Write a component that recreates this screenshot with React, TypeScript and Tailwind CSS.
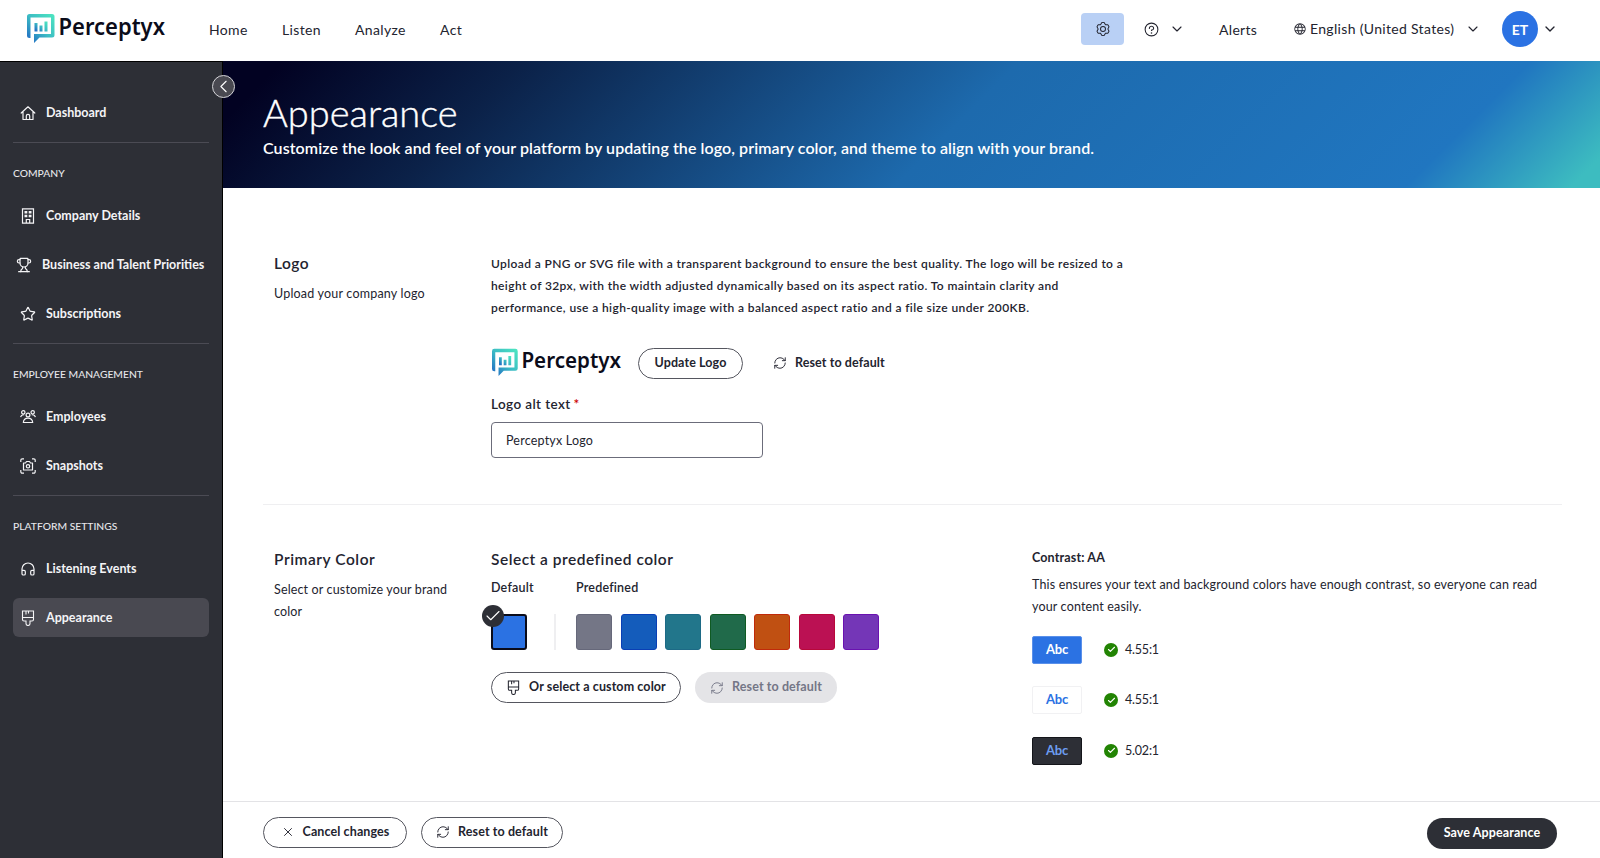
import type { ReactNode } from 'react';
import { ChevronDown, ChevronLeft, Check, Headphones, RefreshCw, Star, Trophy, X } from 'lucide-react';
import { PiGearSix, PiGlobe, PiQuestion } from 'react-icons/pi';

const swatches = [
  'bg-[#747686] border-[#66687a]',
  'bg-[#145cbb] border-[#0a3fb5]',
  'bg-[#22768b] border-[#1d6a86]',
  'bg-[#206a4a] border-[#0f5a22]',
  'bg-[#c05012] border-[#c02a0a]',
  'bg-[#bb1153] border-[#b8083a]',
  'bg-[#7436b7] border-[#6a12b0]',
];

const contrasts = [
  { box: 'bg-[#2b72e3] border-[#5a90ea] text-white', ratio: '4.55:1' },
  { box: 'bg-white border-[#f1f1f3] text-[#2b72e3]', ratio: '4.55:1' },
  { box: 'bg-[#2d2f36] border-[#14151a] text-[#6c9cf0]', ratio: '5.02:1' },
];

function Logo({ className, id }: { className: string; id: string }) {
  return (
    <svg viewBox="0 -3 139 33" className={className} role="img" aria-label="Perceptyx Logo">
      <defs>
        <linearGradient id={id} x1="0" y1="1" x2="1" y2="0">
          <stop offset="0.1" stopColor="#2372c4" />
          <stop offset="0.5" stopColor="#3cbcc4" />
          <stop offset="1" stopColor="#4ee8c0" />
        </linearGradient>
      </defs>
      <path
        d="M2.500 0H25a2.500 2.500 0 0 1 2.500 2.500V21a2.500 2.500 0 0 1-2.500 2.500H12.500L7 29V20H24V3.500H3.500V24H2.500a2.500 2.500 0 0 1-2.500-2.500V2.500a2.500 2.500 0 0 1 2.500-2.500Z"
        fill={`url(#${id})`}
      />
      <path d="M7.500 9h3v8.500h-3zM12.500 11.500h3v6h-3zM17.500 7.500h3v10h-3z" fill={`url(#${id})`} />
      <text
        x="31.500"
        y="20.500"
        textLength="106.500"
        lengthAdjust="spacingAndGlyphs"
        className="font-['Noto_Sans'] text-[22.500px] font-semibold"
        fill="#0b0c1a"
      >
        Perceptyx
      </text>
    </svg>
  );
}

function BrushIcon({ className }: { className?: string }) {
  return (
    <svg viewBox="0 0 16 16" className={className} fill="none" stroke="currentColor" strokeWidth="1.100">
      <path d="M2.500 1h11v8.500a1.500 1.500 0 0 1-1.500 1.500h-2v2.500a2 2 0 0 1-4 0V11H4a1.500 1.500 0 0 1-1.500-1.500ZM2.500 7.500h11M6 1v3.500M8.500 1v2.500" />
    </svg>
  );
}

function HomeIcon() {
  return (
    <svg viewBox="0 0 16 16" className="size-4" fill="none" stroke="currentColor" strokeWidth="1.200" strokeLinejoin="round" strokeLinecap="round">
      <path d="M1.200 8L8 1.800 14.800 8M3 6.800v7.700h10V6.800M6.300 14.300v-3.300a1.700 1.700 0 0 1 3.400 0v3.300" />
    </svg>
  );
}

function BuildingIcon() {
  return (
    <svg viewBox="0 0 16 16" className="size-4" fill="none" stroke="currentColor" strokeWidth="1.200">
      <path d="M2.500.8h11v14.400h-11zM6.300 15v-3.500h3.400V15" />
      <path d="M4.500 3h2.800v2.500H4.500zM8.700 3h2.800v2.500H8.700zM4.500 6.800h2.800v2.500H4.500zM8.700 6.800h2.800v2.500H8.700z" fill="currentColor" stroke="none" />
    </svg>
  );
}

function PeopleIcon() {
  return (
    <svg viewBox="0 0 16 16" className="size-4" fill="none" stroke="currentColor" strokeWidth="1.200" strokeLinejoin="round">
      <circle cx="3.300" cy="3.300" r="1.700" />
      <circle cx="12.700" cy="3.300" r="1.700" />
      <circle cx="8" cy="6" r="1.900" />
      <path d="M3.300 13.500c.3-2.700 2-4.300 4.700-4.300s4.400 1.600 4.700 4.300zM.6 8.200C1 6.500 2.200 5.600 4.200 5.800M15.400 8.200c-.4-1.700-1.600-2.600-3.600-2.400" />
    </svg>
  );
}

function SnapshotIcon() {
  return (
    <svg viewBox="0 0 16 16" className="size-4" fill="none" stroke="currentColor" strokeWidth="1.200" strokeLinejoin="round">
      <path d="M.8 4V2.200A1.400 1.400 0 0 1 2.200.8H4M12 .8h1.800a1.400 1.400 0 0 1 1.400 1.400V4M15.200 12v1.800a1.400 1.400 0 0 1-1.400 1.400H12M4 15.200H2.200a1.400 1.400 0 0 1-1.400-1.400V12" />
      <path d="M3.500 5h2l1-1.500h3l1 1.500h2v7h-9z" />
      <circle cx="8" cy="8.300" r="1.700" />
    </svg>
  );
}

function NavItem({ icon, label, className = 'pl-[7px] gap-2.5', active = false }: { icon: ReactNode; label: string; className?: string; active?: boolean }) {
  return (
    <a
      href="#"
      className={`flex h-[39px] items-center rounded-md whitespace-nowrap text-[12.500px] font-bold text-[#f4f4f6] ${className} ${active ? 'bg-[#494951]' : ''}`}
    >
      {icon}
      <span className="pt-[2px]">{label}</span>
    </a>
  );
}

function NavGroup({ title, children }: { title: string; children: ReactNode }) {
  return (
    <div className="mt-[10px] border-t border-[#4b4b54] pt-[21px]">
      <h2 className="mb-[14px] h-[18px] text-[10.300px] leading-[18px] font-medium text-[#e6e6ea]">{title}</h2>
      <div className="flex flex-col gap-[10px]">{children}</div>
    </div>
  );
}

function PillButton({ icon, label, className }: { icon?: ReactNode; label: string; className: string }) {
  return (
    <button className={`flex h-[31px] shrink-0 items-center justify-center gap-2 rounded-full whitespace-nowrap text-[12.500px] font-bold tracking-[0.1px] ${className}`}>
      {icon}
      {label}
    </button>
  );
}

export default function App() {
  return (
    <div className="flex h-[858px] w-[1600px] flex-col overflow-hidden bg-white font-['Lato',sans-serif] text-[#23242f]">
      <header className="flex h-[61px] shrink-0 items-center pb-[3px] pl-[27px]">
        <Logo id="header-logo" className="mb-[4px] h-[33px] w-[139px]" />
        <nav className="ml-[43px] flex text-[14px] tracking-[0.35px]">
          <a href="#" className="w-[73px]">Home</a>
          <a href="#" className="w-[73px]">Listen</a>
          <a href="#" className="w-[85px]">Analyze</a>
          <a href="#">Act</a>
        </nav>
        <div className="ml-auto flex w-[519px] items-center text-[14px] tracking-[0.32px]">
          <button className="flex h-[32px] w-[43px] items-center justify-center rounded bg-[#b9d0f5]">
            <PiGearSix className="size-4 rotate-90" />
          </button>
          <PiQuestion className="ml-[19px] size-[17px]" />
          <ChevronDown className="ml-[9px] size-4" strokeWidth={1.7} />
          <span className="ml-[34px] w-[74px]">Alerts</span>
          <PiGlobe className="size-[14px]" />
          <span className="-mt-[2px] ml-[3px] w-[155px] whitespace-nowrap">English (United States)</span>
          <ChevronDown className="size-4" strokeWidth={1.7} />
          <span className="ml-[21px] flex size-9 items-center justify-center rounded-full bg-[#2b72e3] text-[14px] font-bold tracking-normal text-white">ET</span>
          <ChevronDown className="ml-[4px] size-4" strokeWidth={2} />
        </div>
      </header>

      <div className="flex min-h-0 flex-1">
        <aside className="relative w-[223px] shrink-0 border-t border-r border-black bg-[#2d2f36] pr-[13px] pl-[13px] pt-[31px]">
          <button className="absolute top-[13px] left-[212px] z-10 flex size-[23px] items-center justify-center rounded-full border border-[#d4d4d8] bg-[#494951] text-white">
            <ChevronLeft className="size-[21px] shrink-0" strokeWidth={1.3} />
          </button>
          <NavItem icon={<HomeIcon />} label="Dashboard" />
          <NavGroup title="COMPANY">
            <NavItem icon={<BuildingIcon />} label="Company Details" />
            <NavItem icon={<Trophy className="size-4" strokeWidth={1.8} />} label="Business and Talent Priorities" className="pl-[3px] gap-2.5" />
            <NavItem icon={<Star className="size-4" strokeWidth={1.8} />} label="Subscriptions" />
          </NavGroup>
          <NavGroup title="EMPLOYEE MANAGEMENT">
            <NavItem icon={<PeopleIcon />} label="Employees" />
            <NavItem icon={<SnapshotIcon />} label="Snapshots" />
          </NavGroup>
          <NavGroup title="PLATFORM SETTINGS">
            <NavItem icon={<Headphones className="size-4" strokeWidth={1.8} />} label="Listening Events" />
            <NavItem icon={<BrushIcon className="size-4" />} label="Appearance" active />
          </NavGroup>
        </aside>

        <main className="flex min-w-0 flex-1 flex-col">
          <div className="h-[127px] shrink-0 bg-[linear-gradient(135deg,#020222_4%,#0b2148_20%,#1d6aad_53%,#2076c0_87%,#3dbcc0_98%)] pt-[29px] pl-[40px] text-white">
            <h1 className="text-[38px] leading-[44px] font-light [-webkit-text-stroke:0.4px]">Appearance</h1>
            <p className="mt-[2px] text-[16px] leading-[24px] font-semibold tracking-[0.08px]">
              Customize the look and feel of your platform by updating the logo, primary color, and theme to align with your brand.
            </p>
          </div>

          <div className="ml-[40px] mr-[38px] flex h-[317px] shrink-0 border-b border-[#efeff1] pt-[63px] pl-[11px]">
            <div className="w-[217px] shrink-0">
              <h2 className="text-[15.500px] leading-[24px] font-semibold tracking-[0.5px]">Logo</h2>
              <p className="mt-[7px] text-[12.500px] leading-[23px] tracking-[0.2px]">Upload your company logo</p>
            </div>
            <div className="pt-[2px]">
              <p className="text-[12px] leading-[21.750px] font-semibold tracking-[0.38px] whitespace-nowrap">
                Upload a PNG or SVG file with a transparent background to ensure the best quality. The logo will be resized to a
                <br />
                height of 32px, with the width adjusted dynamically based on its aspect ratio. To maintain clarity and
                <br />
                performance, use a high-quality image with a balanced aspect ratio and a file size under 200KB.
              </p>
              <div className="mt-[29px] flex h-[32px] items-center">
                <Logo id="preview-logo" className="mb-[3px] ml-[1px] h-[31px] w-[130px]" />
                <PillButton label="Update Logo" className="ml-4 w-[105px] border border-[#55565f]" />
                <PillButton icon={<RefreshCw className="size-[14px]" strokeWidth={1.6} />} label="Reset to default" className="ml-[30px]" />
              </div>
              <label className="mt-[14px] block text-[13.500px] leading-[22px] font-semibold tracking-[0.4px]" htmlFor="alt-text">
                Logo alt text<span className="ml-[3px] text-[#c00]">*</span>
              </label>
              <input
                id="alt-text"
                defaultValue="Perceptyx Logo"
                className="mt-[7px] block h-[36px] w-[272px] rounded border border-[#6b6c7a] px-[14px] text-[12.500px] tracking-[0.2px]"
              />
            </div>
          </div>

          <div className="ml-[51px] flex h-[296px] shrink-0 pt-[42px]">
            <div className="w-[217px] shrink-0">
              <h2 className="text-[15.500px] leading-[24px] font-semibold tracking-[0.55px]">Primary Color</h2>
              <p className="mt-[8px] text-[12.500px] leading-[22px] tracking-[0.15px]">
                Select or customize your brand
                <br />
                color
              </p>
            </div>
            <div className="w-[541px] shrink-0">
              <h3 className="text-[15.500px] leading-[24px] font-semibold tracking-[0.5px]">Select a predefined color</h3>
              <div className="mt-[6px] flex text-[12.500px] leading-[22px] font-semibold tracking-[0.2px]">
                <div className="w-[63px]">
                  Default
                  <div className="relative mt-[15px] size-9 rounded-[3px] border-2 border-[#0b0c1a] bg-[#2b72e3]">
                    <span className="absolute -top-[11px] -left-[11px] flex size-[22px] items-center justify-center rounded-full bg-[#2d2f36] text-white">
                      <Check className="size-[18px]" strokeWidth={1.5} />
                    </span>
                  </div>
                </div>
                <div className="mt-[37px] mr-[20px] h-9 w-[2px] bg-[#efeff1]" />
                <div>
                  Predefined
                  <div className="mt-[15px] flex gap-[8.500px]">
                    {swatches.map((color) => (
                      <button key={color} className={`size-9 rounded-[3px] border ${color}`} />
                    ))}
                  </div>
                </div>
              </div>
              <div className="mt-[22px] flex gap-[14px]">
                <PillButton icon={<BrushIcon className="size-[15px]" />} label="Or select a custom color" className="w-[190px] border border-[#55565f]" />
                <PillButton icon={<RefreshCw className="size-[14px]" strokeWidth={1.6} />} label="Reset to default" className="w-[142px] bg-[#e4e4e7] text-[#747686]" />
              </div>
            </div>
            <div>
              <h3 className="text-[12.500px] leading-[21px] font-bold tracking-[0.15px]">Contrast: AA</h3>
              <p className="mt-[6px] text-[12.500px] leading-[21.750px] tracking-[0.16px] whitespace-nowrap">
                This ensures your text and background colors have enough contrast, so everyone can read
                <br />
                your content easily.
              </p>
              <div className="mt-[18px] flex flex-col gap-[22.500px]">
                {contrasts.map((item) => (
                  <div key={item.box} className="flex items-center text-[12.500px] tracking-[-0.2px]">
                    <span className={`flex h-[28px] w-[50px] items-center justify-center rounded-[2px] border text-[13px] font-bold ${item.box}`}>Abc</span>
                    <span className="mr-[7px] ml-[22px] flex size-[14px] items-center justify-center rounded-full bg-[#228403] text-white">
                      <Check className="size-[9px]" strokeWidth={3} />
                    </span>
                    <span className="pt-px">{item.ratio}</span>
                  </div>
                ))}
              </div>
            </div>
          </div>

          <footer className="flex flex-1 items-center gap-[14px] border-t border-[#e3e3e6] pt-[4px] pr-[43px] pl-[40px]">
            <PillButton icon={<X className="size-[14px]" strokeWidth={1.6} />} label="Cancel changes" className="w-[144px] border border-[#55565f]" />
            <PillButton icon={<RefreshCw className="size-[14px]" strokeWidth={1.6} />} label="Reset to default" className="w-[142px] border border-[#55565f]" />
            <PillButton label="Save Appearance" className="mt-[2px] ml-auto w-[130px] bg-[#2d2f36] text-white" />
          </footer>
        </main>
      </div>
    </div>
  );
}
